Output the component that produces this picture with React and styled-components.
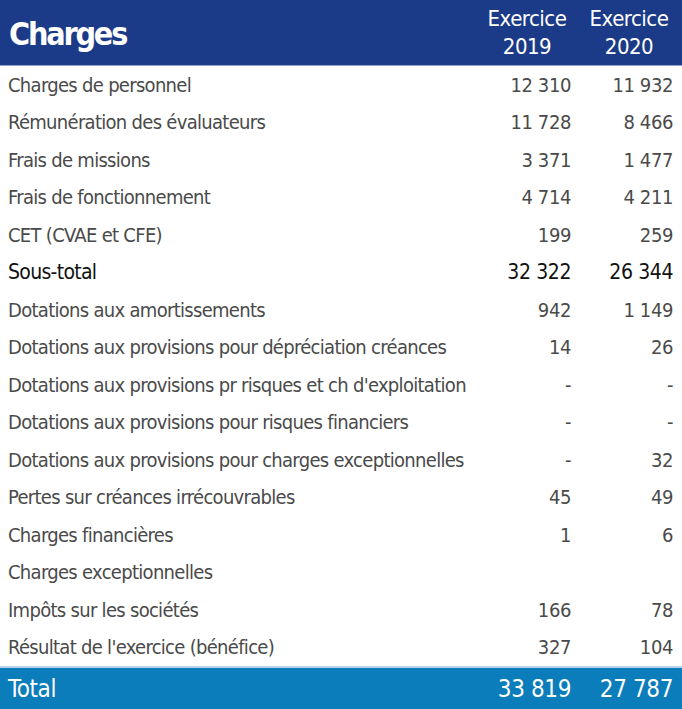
import React from "react";
import styled, { createGlobalStyle } from "styled-components";

const rows = [
  ["Charges de personnel", "12 310", "11 932"],
  ["Rémunération des évaluateurs", "11 728", "8 466"],
  ["Frais de missions", "3 371", "1 477"],
  ["Frais de fonctionnement", "4 714", "4 211"],
  ["CET (CVAE et CFE)", "199", "259"],
  ["Sous-total", "32 322", "26 344", true],
  ["Dotations aux amortissements", "942", "1 149"],
  ["Dotations aux provisions pour dépréciation créances", "14", "26"],
  ["Dotations aux provisions pr risques et ch d'exploitation", "-", "-"],
  ["Dotations aux provisions pour risques financiers", "-", "-"],
  ["Dotations aux provisions pour charges exceptionnelles", "-", "32"],
  ["Pertes sur créances irrécouvrables", "45", "49"],
  ["Charges financières", "1", "6"],
  ["Charges exceptionnelles", "", ""],
  ["Impôts sur les sociétés", "166", "78"],
  ["Résultat de l'exercice (bénéfice)", "327", "104"],
];

export default function App() {
  return (
    <>
      <Global />
      <S.Table>
        <S.Head>
          <S.Title>Charges</S.Title>
          <S.Year>Exercice<br />2019</S.Year>
          <S.Year>Exercice<br />2020</S.Year>
        </S.Head>
        {rows.map(([label, a, b, strong]) => (
          <S.Row key={label} $strong={strong}>
            <S.Label>{label}</S.Label>
            <S.Num>{a}</S.Num>
            <S.Num>{b}</S.Num>
          </S.Row>
        ))}
        <S.Total>
          <S.Label>Total</S.Label>
          <S.Num>33 819</S.Num>
          <S.Num>27 787</S.Num>
        </S.Total>
      </S.Table>
    </>
  );
}

const Global = createGlobalStyle`
  body {
    margin: 0;
    background: #fff;
    font-family: "DejaVu Sans Condensed", "Liberation Sans", sans-serif;
  }
`;

const line = `
  display: grid;
  grid-template-columns: minmax(0, 1fr) 102px 102px;
  align-items: center;
`;

const S = {
  Table: styled.div`
    width: 682px;
    height: 709px;
    display: flex;
    flex-direction: column;
  `,
  Head: styled.div`
    ${line}
    height: 66px;
    background: #1b3a87;
    color: #fff;
    border-bottom: 1px solid #8fa6d4;
    box-sizing: border-box;
  `,
  Title: styled.div`
    padding-left: 9px;
    font-size: 32px;
    font-weight: 700;
    letter-spacing: -2.2px;
    padding-top: 2px;
  `,
  Year: styled.div`
    text-align: center;
    font-size: 22px;
    line-height: 28px;
    letter-spacing: -0.5px;
    padding-right: 4px;
  `,
  Row: styled.div`
    ${line}
    height: 37.5px;
    color: ${(p) => (p.$strong ? "#111" : "#4a4a4a")};
    font-size: ${(p) => (p.$strong ? "21px" : "20px")};
    letter-spacing: -0.7px;
  `,
  Label: styled.div`
    padding-left: 8px;
    white-space: nowrap;
  `,
  Num: styled.div`
    text-align: right;
    padding-right: 9px;
    letter-spacing: -0.4px;
  `,
  Total: styled.div`
    ${line}
    flex: 1;
    background: #0a7dba;
    color: #fff;
    font-size: 24px;
    letter-spacing: -0.4px;
    border-top: 2px solid #b9d3ea;
  `,
};
